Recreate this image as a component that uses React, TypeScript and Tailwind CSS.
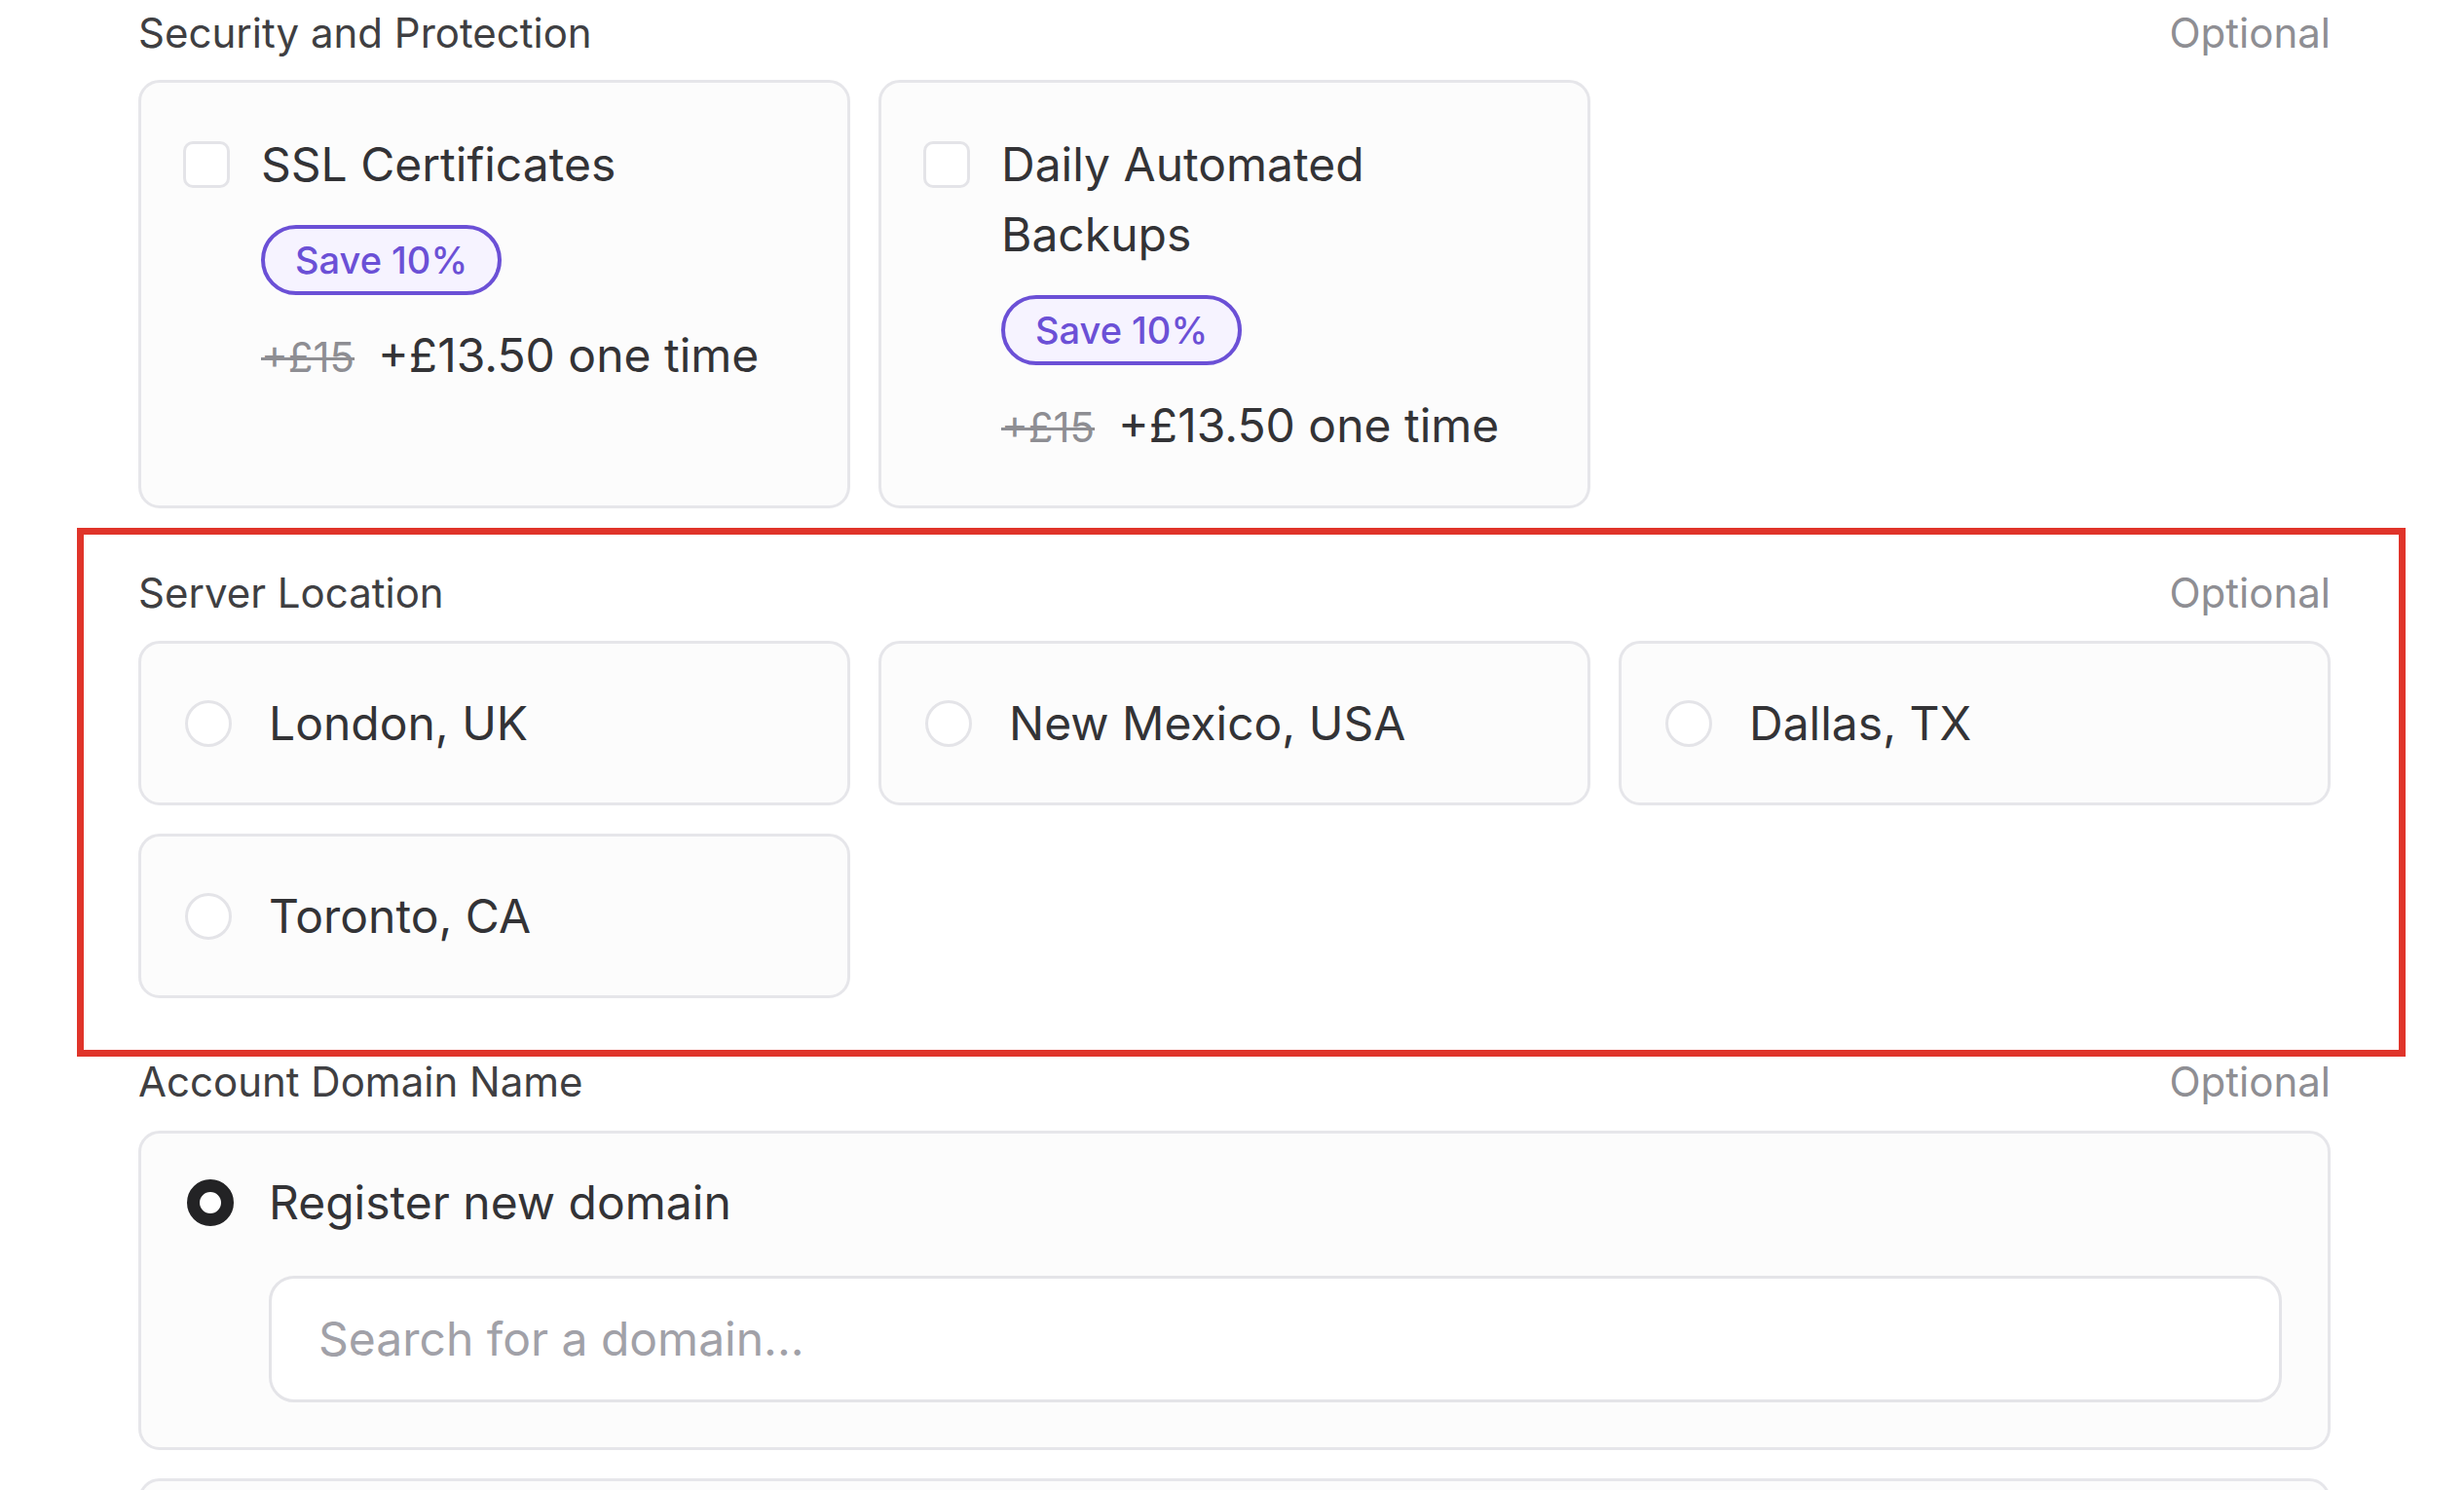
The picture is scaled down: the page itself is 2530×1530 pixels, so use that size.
import React from "react";

const font = { fontFamily: 'Inter, "Noto Sans", "Liberation Sans", sans-serif' };

function SectionHeader({ title }: { title: string }) {
  return (
    <div className="flex h-[60px] items-center justify-between text-[42px] leading-[60px]">
      <span className="text-[#3f3f42]">{title}</span>
      <span className="text-[#8e8e93]">Optional</span>
    </div>
  );
}

function AddonCard({ title }: { title: string }) {
  return (
    <div className="flex items-start gap-[32px] rounded-[22px] border-[3px] border-[#e6e6ea] bg-[#fcfcfc] px-[43px] pb-[44px] pt-[48px]">
      <div className="mt-[12px] h-[48px] w-[48px] shrink-0 rounded-[10px] border-[3px] border-[#e4e4e8] bg-white" />
      <div className="flex min-w-0 flex-col">
        <div className="text-[48px] leading-[72px] text-[#333336]">{title}</div>
        <div className="mt-[26px] flex">
          <span className="flex h-[72px] items-center rounded-full border-[4px] border-[#6b50d6] bg-[#f6f3ff] px-[31px] text-[38px] font-medium text-[#6b50d6]">
            Save 10%
          </span>
        </div>
        <div className="mt-[26px] flex items-baseline gap-[24px] leading-[72px]">
          <span className="text-[42px] text-[#8e8e93] line-through decoration-[3px]">+£15</span>
          <span className="text-[48px] text-[#333336]">+£13.50 one time</span>
        </div>
      </div>
    </div>
  );
}

function LocationCard({ label }: { label: string }) {
  return (
    <div className="flex h-[169px] items-center gap-[38px] rounded-[22px] border-[3px] border-[#e6e6ea] bg-[#fcfcfc] px-[45px]">
      <div className="h-[48px] w-[48px] shrink-0 rounded-full border-[3px] border-[#e4e4e8] bg-white" />
      <span className="text-[48px] leading-[72px] text-[#333336]">{label}</span>
    </div>
  );
}

export default function App() {
  return (
    <div className="h-[1530px] w-[2530px] overflow-hidden bg-white" style={font}>
      <div className="flex flex-col pl-[142px] pr-[137px] pt-[4px]">
        {/* Security and Protection */}
        <section className="flex flex-col gap-[18px]">
          <SectionHeader title="Security and Protection" />
          <div className="grid grid-cols-3 gap-[29px]">
            <AddonCard title="SSL Certificates" />
            <AddonCard title="Daily Automated Backups" />
          </div>
        </section>

        {/* Server Location */}
        <section className="relative mt-[57px] flex flex-col gap-[19px]">
          <SectionHeader title="Server Location" />
          <div className="grid grid-cols-3 gap-[29px]">
            <LocationCard label="London, UK" />
            <LocationCard label="New Mexico, USA" />
            <LocationCard label="Dallas, TX" />
            <LocationCard label="Toronto, CA" />
          </div>
          <div className="pointer-events-none absolute -bottom-[60px] -left-[63px] -right-[77px] -top-[37px] border-[7px] border-[#e0342a]" />
        </section>

        {/* Account Domain Name */}
        <section className="mt-[56px] flex flex-col gap-[20px]">
          <SectionHeader title="Account Domain Name" />
          <div className="flex flex-col gap-[29px]">
            <div className="rounded-[22px] border-[3px] border-[#e6e6ea] bg-[#fcfcfc] px-[47px] pb-[46px] pt-[35px]">
              <div className="flex h-[72px] items-center gap-[36px]">
                <div className="h-[48px] w-[48px] shrink-0 rounded-full border-[13px] border-[#232325] bg-white" />
                <span className="text-[48px] leading-[72px] text-[#333336]">Register new domain</span>
              </div>
              <div className="ml-[84px] mt-[39px] flex h-[130px] items-center rounded-[26px] border-[3px] border-[#e4e4e8] bg-white px-[48px]">
                <span className="text-[48px] text-[#a1a1a8]">Search for a domain...</span>
              </div>
            </div>
            <div className="h-[200px] rounded-[22px] border-[3px] border-[#e6e6ea] bg-[#fcfcfc]" />
          </div>
        </section>
      </div>
    </div>
  );
}
